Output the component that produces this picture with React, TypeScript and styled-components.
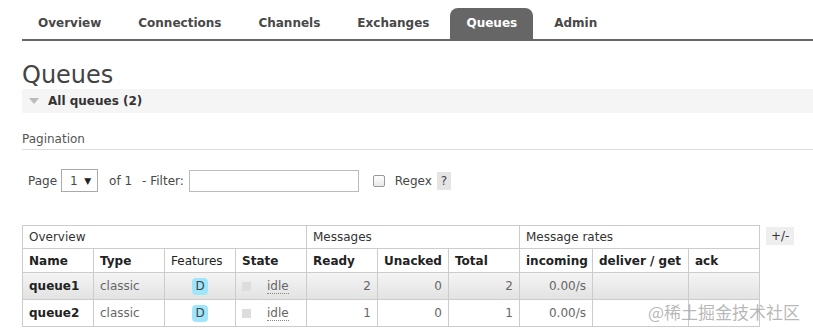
import React from 'react';
import styled, { createGlobalStyle } from 'styled-components';

const Global = createGlobalStyle`
    body {
        margin: 0;
        background: #fff;
        font-family: 'DejaVu Sans', Verdana, sans-serif;
        font-size: 12px;
        color: #484848;
    }
`;

const Page = styled.div`
    position: relative;
    padding: 8px 0 0 22px;
    height: 336px;
    box-sizing: border-box;
    overflow: hidden;
`;

const TabBar = styled.ul`
    display: flex;
    gap: 5px;
    margin: 0;
    padding: 0;
    list-style: none;
    border-bottom: 2px solid #666;
`;

const Tab = styled.li<{ $active?: boolean }>`
    height: 31px;
    line-height: 31px;
    padding: 0 16px;
    font-weight: bold;
    font-size: 12px;
    border-radius: 8px 8px 0 0;
    color: ${p => (p.$active ? '#fff' : '#484848')};
    background: ${p => (p.$active ? '#666' : 'transparent')};
`;

const Title = styled.h1`
    margin: 21px 0 0;
    font-size: 24px;
    font-weight: normal;
    color: #444;
    line-height: 27px;
`;

const SectionBar = styled.div`
    display: flex;
    align-items: center;
    gap: 9px;
    height: 24px;
    padding-left: 7px;
    background: #f5f5f5;
    font-weight: bold;
    font-size: 12px;
    color: #333;
`;

const Arrow = styled.span`
    width: 0;
    height: 0;
    border-left: 5px solid transparent;
    border-right: 5px solid transparent;
    border-top: 6px solid #bbb;
`;

const SubHeading = styled.h3`
    margin: 19px 0 0;
    padding-bottom: 3px;
    border-bottom: 1px solid #ddd;
    font-size: 12px;
    font-weight: normal;
    color: #555;
`;

const FilterRow = styled.div`
    display: flex;
    align-items: center;
    margin: 19px 0 0 6px;
    height: 23px;
    color: #484848;
`;

const Label = styled.span<{ $ml?: number }>`
    margin-left: ${p => p.$ml ?? 0}px;
`;

const Select = styled.div`
    display: flex;
    align-items: center;
    justify-content: space-between;
    box-sizing: border-box;
    width: 37px;
    height: 23px;
    margin-left: 4px;
    padding: 0 6px 0 8px;
    border: 1px solid #aaa;
    font-size: 12px;
    & span:last-child { font-size: 9px; color: #222; }
`;

const TextInput = styled.div`
    box-sizing: border-box;
    width: 170px;
    height: 22px;
    margin-left: 5px;
    border: 1px solid #bbb;
`;

const CheckBox = styled.span`
    display: inline-block;
    box-sizing: border-box;
    width: 12px;
    height: 12px;
    margin: 0 0 0 14px;
    border: 1px solid #999;
    border-radius: 2px;
    background: linear-gradient(#fff, #e8e8e8);
`;

const HelpBox = styled.span`
    margin-left: 5px;
    padding: 2px 4px;
    background: #e4e4e4;
    color: #444;
`;

const TableWrap = styled.div`
    display: flex;
    align-items: flex-start;
    gap: 6px;
    margin-top: 33px;
`;

const Table = styled.table`
    border-collapse: collapse;
    table-layout: fixed;
    width: 737px;
    font-size: 12px;
`;

const GroupCell = styled.th`
    height: 22px;
    padding: 0 6px;
    border: 1px solid #ccc;
    text-align: left;
    font-weight: normal;
    color: #333;
`;

const HeadCell = styled.th<{ $plain?: boolean }>`
    height: 23px;
    padding: 0 6px;
    border: 1px solid #ccc;
    text-align: left;
    font-weight: ${p => (p.$plain ? 'normal' : 'bold')};
    color: #222;
    white-space: nowrap;
`;

const Row = styled.tr<{ $shade?: boolean }>`
    background: ${p => (p.$shade ? 'linear-gradient(#f4f4f4, #e2e2e2)' : '#fff')};
`;

const Cell = styled.td<{ $align?: string; $strong?: boolean }>`
    height: 26px;
    padding: 0 6px;
    border: 1px solid #ccc;
    text-align: ${p => p.$align ?? 'left'};
    font-weight: ${p => (p.$strong ? 'bold' : 'normal')};
    color: ${p => (p.$strong ? '#222' : '#666')};
    white-space: nowrap;
`;

const Badge = styled.span`
    display: inline-block;
    width: 16px;
    height: 17px;
    line-height: 17px;
    border-radius: 4px;
    background: #a0e6fb;
    color: #444;
    text-align: center;
    font-size: 12px;
`;

const StateBox = styled.span`
    display: inline-flex;
    align-items: center;
    gap: 16px;
`;

const StateDot = styled.span`
    display: inline-block;
    width: 9px;
    height: 9px;
    background: #ddd;
`;

const Idle = styled.span`
    border-bottom: 1px dotted #888;
    line-height: 14px;
`;

const Toggle = styled.span`
    margin-top: 2px;
    padding: 2px 5px;
    background: #eee;
    color: #333;
`;

const Watermark = styled.div`
    position: absolute;
    left: 648px;
    top: 299px;
    font-family: 'Noto Sans CJK SC', sans-serif;
    font-size: 17px;
    color: rgba(160, 160, 160, 0.75);
`;

const tabs = ['Overview', 'Connections', 'Channels', 'Exchanges', 'Queues', 'Admin'];

const queues = [
    { name: 'queue1', ready: 2, unacked: 0, total: 2 },
    { name: 'queue2', ready: 1, unacked: 0, total: 1 },
];

const widths = [71, 71, 71, 71, 71, 71, 71, 73, 96, 71];

const App = () => {
    return (
        <Page>
            <Global />
            <TabBar>
                {tabs.map(t => (
                    <Tab key={t} $active={t === 'Queues'}>{t}</Tab>
                ))}
            </TabBar>
            <Title>Queues</Title>
            <SectionBar>
                <Arrow />
                All queues (2)
            </SectionBar>
            <SubHeading>Pagination</SubHeading>
            <FilterRow>
                <Label>Page</Label>
                <Select><span>1</span><span>▼</span></Select>
                <Label $ml={11}>of 1</Label>
                <Label $ml={10}>- Filter:</Label>
                <TextInput />
                <CheckBox />
                <Label $ml={10}>Regex</Label>
                <HelpBox>?</HelpBox>
            </FilterRow>
            <TableWrap>
                <Table>
                    <colgroup>
                        {widths.map((w, i) => <col key={i} style={{ width: w }} />)}
                    </colgroup>
                    <thead>
                        <tr>
                            <GroupCell colSpan={4}>Overview</GroupCell>
                            <GroupCell colSpan={3}>Messages</GroupCell>
                            <GroupCell colSpan={3}>Message rates</GroupCell>
                        </tr>
                        <tr>
                            <HeadCell>Name</HeadCell>
                            <HeadCell>Type</HeadCell>
                            <HeadCell $plain>Features</HeadCell>
                            <HeadCell>State</HeadCell>
                            <HeadCell>Ready</HeadCell>
                            <HeadCell>Unacked</HeadCell>
                            <HeadCell>Total</HeadCell>
                            <HeadCell>incoming</HeadCell>
                            <HeadCell>deliver / get</HeadCell>
                            <HeadCell>ack</HeadCell>
                        </tr>
                    </thead>
                    <tbody>
                        {queues.map((q, i) => (
                            <Row key={q.name} $shade={i === 0}>
                                <Cell $strong>{q.name}</Cell>
                                <Cell>classic</Cell>
                                <Cell $align="center"><Badge>D</Badge></Cell>
                                <Cell><StateBox><StateDot /><Idle>idle</Idle></StateBox></Cell>
                                <Cell $align="right">{q.ready}</Cell>
                                <Cell $align="right">{q.unacked}</Cell>
                                <Cell $align="right">{q.total}</Cell>
                                <Cell $align="right">0.00/s</Cell>
                                <Cell />
                                <Cell />
                            </Row>
                        ))}
                    </tbody>
                </Table>
                <Toggle>+/-</Toggle>
            </TableWrap>
            <Watermark>@稀土掘金技术社区</Watermark>
        </Page>
    );
};

export default App;
